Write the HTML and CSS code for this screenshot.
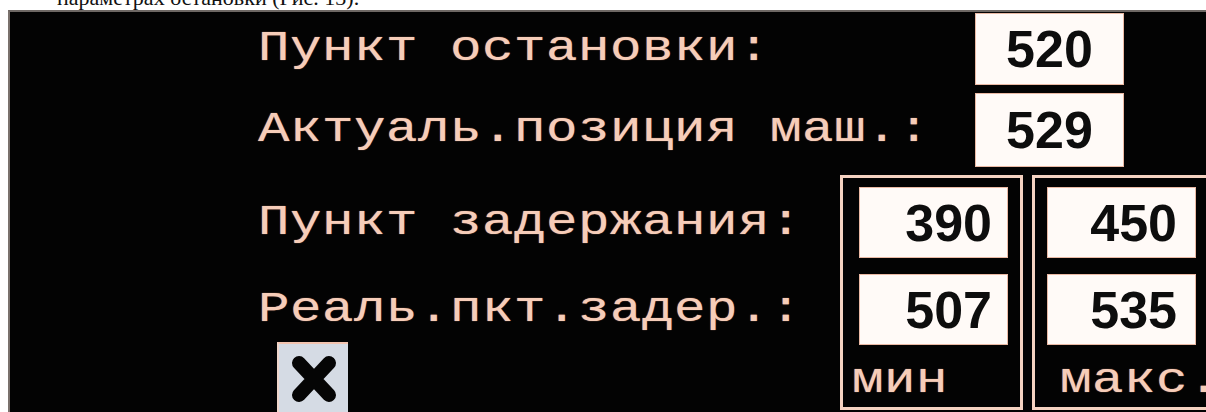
FILE: index.html
```html
<!DOCTYPE html>
<html lang="ru">
<head>
<meta charset="utf-8">
<title>Параметры остановки</title>
<link rel="stylesheet" href="styles.css">
</head>
<body>
<p class="caption"><span class="caption-text">параметрах остановки (Рис. 13).</span></p>
<section class="panel">
  <div class="screen">
    <div class="label"><span class="term">Пункт остановки:</span></div>
    <div class="value-slot"><div class="field field-center">520</div></div>

    <div class="label"><span class="term">Актуаль.позиция маш.:</span></div>
    <div class="value-slot"><div class="field field-center">529</div></div>

    <div class="lower-labels">
      <div class="label-line"><span class="term">Пункт задержания:</span></div>
      <div class="label-line"><span class="term">Реаль.пкт.задер.:</span></div>
      <button class="close-btn" type="button" aria-label="Закрыть">
        <svg width="46" height="48" viewBox="0 0 46 48" aria-hidden="true">
          <path d="M8 8 L38 40 M38 8 L8 40" stroke="#050505" stroke-width="14" stroke-linecap="round" fill="none"/>
        </svg>
      </button>
    </div>

    <div class="limits">
      <div class="limit-frame">
        <div class="field field-right">390</div>
        <div class="field field-right">507</div>
        <div class="limit-caption"><span class="term">мин</span></div>
      </div>
      <div class="limit-frame limit-frame-max">
        <div class="field field-right">450</div>
        <div class="field field-right">535</div>
        <div class="limit-caption"><span class="term">макс.</span></div>
      </div>
    </div>
  </div>
</section>
</body>
</html>
```

FILE: styles.css
```css
html, body {
  margin: 0;
  padding: 0;
  background: #ffffff;
  width: 1206px;
  height: 412px;
  overflow: hidden;
}

/* document line above the screen shot, cropped at the top */
.caption {
  margin: 0;
  height: 10px;
  overflow: hidden;
  padding-left: 57px;
}
.caption-text {
  display: block;
  margin-top: -13px;
  font-family: "Liberation Serif", "DejaVu Serif", serif;
  font-size: 22px;
  line-height: 22px;
  color: #111;
  white-space: nowrap;
}

/* operator terminal */
.panel {
  margin-left: 8px;
  height: 402px;
  background: #030303;
  border-top: 2px solid #6e6864;
  border-left: 2px solid #7a716c;
  overflow: hidden;
}

.screen {
  display: grid;
  grid-template-columns: 582px 1fr;
  grid-template-rows: 72px 74px auto;
  row-gap: 8px;
  padding: 1px 0 0 248px;
}

/* wide terminal lettering: 32px character cells */
.term {
  display: inline-block;
  font-family: "Liberation Mono", "DejaVu Sans Mono", monospace;
  font-size: 42px;
  line-height: 1;
  letter-spacing: 0.4px;
  color: #f6cdb9;
  white-space: nowrap;
  text-shadow: 0 0 1px #c98f78;
  transform: scaleX(1.25);
  transform-origin: left center;
}

.label {
  display: flex;
  align-items: center;
}

.value-slot {
  padding-left: 135px;
  display: flex;
}

.field {
  box-sizing: border-box;
  width: 149px;
  height: 100%;
  background: #fffaf7;
  border: 1px solid #eab9a4;
  display: flex;
  align-items: center;
  font-family: "Liberation Sans", Arial, sans-serif;
  font-weight: bold;
  font-size: 52px;
  color: #0d0d0d;
}
.field-center {
  justify-content: center;
}
.field-right {
  justify-content: flex-end;
  padding-right: 15px;
  height: 71px;
}

/* lower label column with close button */
.lower-labels {
  display: flex;
  flex-direction: column;
  gap: 16px;
  padding-top: 12px;
}
.label-line {
  height: 71px;
  display: flex;
  align-items: center;
}
.close-btn {
  margin: -19px 0 0 19px;
  width: 71px;
  height: 74px;
  padding: 11px 0 0 0;
  display: flex;
  justify-content: center;
  align-items: flex-start;
  background: #d5dbe4;
  border: none;
  border-top: 2px solid #f2c4b0;
  border-left: 2px solid #efd6cb;
}

/* min / max frames */
.limits {
  display: flex;
  gap: 9px;
}
.limit-frame {
  box-sizing: border-box;
  flex: 0 0 183px;
  height: 235px;
  border: 3px solid #f5d2c1;
  padding: 9px 12px 0 16px;
  display: flex;
  flex-direction: column;
  gap: 16px;
}
.limit-frame-max {
  padding-left: 12px;
  padding-right: 0;
}
.limit-frame-max .field-right {
  padding-right: 18px;
}
.limit-caption {
  margin: -6px 0 0 -7px;
  height: 52px;
  display: flex;
  align-items: center;
}
.limit-frame-max .limit-caption {
  margin-left: 13px;
}
```
